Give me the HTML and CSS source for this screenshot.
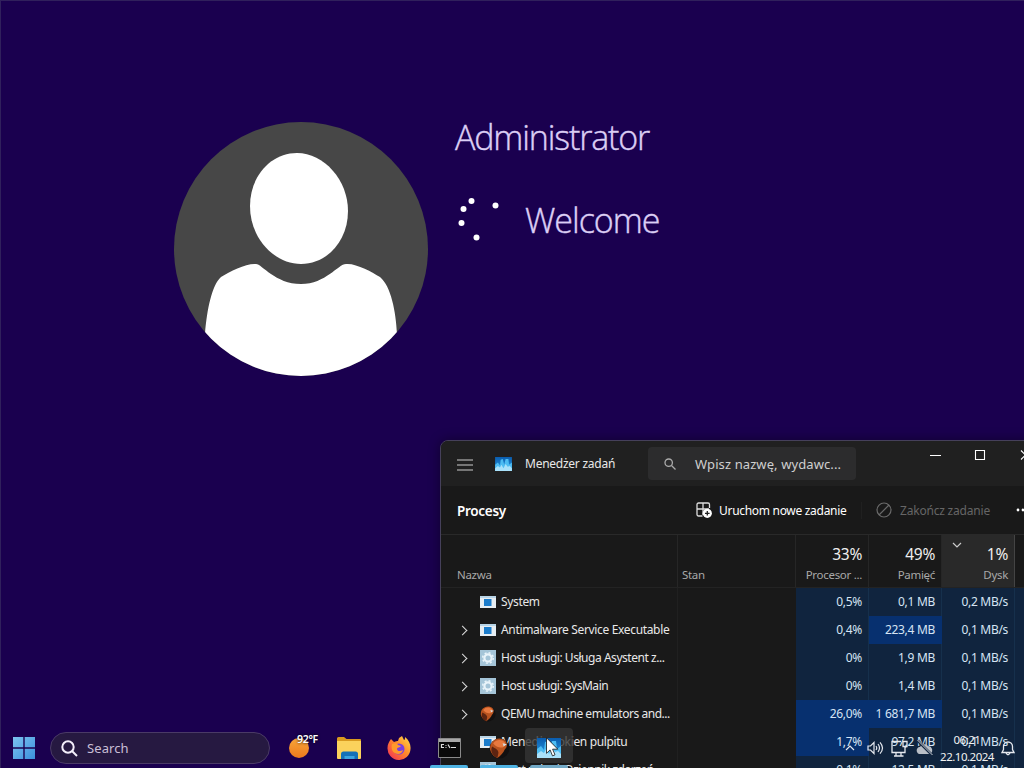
FILE: index.html
```html
<!DOCTYPE html>
<html lang="pl">
<head>
  <meta charset="UTF-8">
  <meta name="viewport" content="width=device-width, initial-scale=1.0">
  <title>Menedżer zadań</title>
  <link rel="stylesheet" href="styles.css">
</head>
<body>
  <svg width="0" height="0" class="defs">
    <defs>
      <linearGradient id="blue" x1="0" y1="0" x2="0" y2="1"><stop offset="0" stop-color="#0a5cae"/><stop offset="1" stop-color="#2ba0e6"/></linearGradient>
      <linearGradient id="win" x1="0" y1="0" x2="1" y2="1"><stop offset="0" stop-color="#7cc4ef"/><stop offset="1" stop-color="#3b8fdc"/></linearGradient>
      <linearGradient id="sun" x1="0" y1="0" x2="0" y2="1"><stop offset="0" stop-color="#f7a63a"/><stop offset="1" stop-color="#ec7a1c"/></linearGradient>
      <linearGradient id="fox" x1="1" y1="0" x2="0" y2="1"><stop offset="0" stop-color="#ffe14a"/><stop offset=".45" stop-color="#ff8a2a"/><stop offset="1" stop-color="#f0285a"/></linearGradient>
    </defs>
    <symbol id="app" viewBox="0 0 16 14"><path fill="#e6edf2" d="M0 1h16v12H0z"/><path fill="#b8d4e6" d="M0 1h16v2H0z"/><path fill="#1b7ccb" d="M4 4h7.500v7H4z"/></symbol>
    <symbol id="gear" viewBox="0 0 16 16"><path fill="#a5c5d8" d="M0 0h16v16H0z"/><circle cx="8" cy="8" r="3.600" fill="none" stroke="#e9f4fa" stroke-width="2.200"/><circle cx="8" cy="8" r="5.300" fill="none" stroke="#e9f4fa" stroke-width="1.500" stroke-dasharray="2 2.160"/></symbol>
    <symbol id="qemu" viewBox="0 0 20 20"><circle cx="10" cy="10" r="9.500" fill="#121010"/><path fill="#b9531f" d="M2 5C5 0 12-1 16 3c2 3 1 6-1 8-1 3-4 6-7 8-3-1-6-4-7-8 0-2 0-4 1-6z"/><path fill="#e8793f" d="M4 5C7 1 12 1 15 4c1 2 0 4-2 5-3 0-6 0-9-4z"/><path fill="#d5dde2" d="M13 5l4 1-3 2z"/><path fill="#5d2411" d="M3 8c3 2 6 3 6 6l-1 5C3 17 1 12 3 8z"/></symbol>
    <symbol id="tm" viewBox="0 0 24 20"><path fill="url(#blue)" d="M0 0h24v20H0z"/><path fill="#4dbcf2" d="M0 20v-9l4-3 3 4 1-8 3-1 2 8 2-8 4 0 1 8 4-3v12z"/><path fill="#a9e1fa" d="M0 20v-4l4-3 3 2 2-4 3 5 3-6 3 4 3-1 3 3v4z"/></symbol>
  </svg>

  <div class="desktop">
    <div class="login">
      <svg class="avatar" width="254" height="254" viewBox="0 0 254 254">
        <clipPath id="round"><circle cx="127" cy="127" r="127"/></clipPath>
        <g clip-path="url(#round)">
          <path fill="#474747" d="M0 0h254v254H0z"/>
          <path fill="#fff" d="M123 31C150 31 174 58 174 89C174 119 153 142 127 142C101 142 76 117 76 84C76 54 97 31 123 31z"/>
          <path fill="#fff" d="M31 212C33 187 38 163 47 155C56 149 73 141 82 142C88 142 101 162 127 162C152 162 164 142 172 142C182 141 198 150 206 155C217 164 222 190 223 212L223 254H31z"/>
        </g>
      </svg>
      <div class="login-text">
        <div class="user">Administrator</div>
        <div class="status">
          <svg width="44" height="46" viewBox="0 0 44 46" fill="#fff">
            <circle cx="15.500" cy="4" r="3"/><circle cx="39.500" cy="8.500" r="3"/><circle cx="7.500" cy="12" r="3"/><circle cx="5.500" cy="26" r="3"/><circle cx="20.500" cy="40.500" r="3"/>
          </svg>
          <span class="welcome">Welcome</span>
        </div>
      </div>
    </div>

    <div class="window">
      <div class="titlebar">
        <svg class="menu" width="16" height="12" viewBox="0 0 16 12" stroke="#ccc" stroke-width="1.200"><path d="M0 1h16M0 6h16M0 11h16"/></svg>
        <svg class="logo" width="17" height="14"><use href="#tm"/></svg>
        <span class="title">Menedżer zadań</span>
        <div class="find">
          <svg width="12" height="12" viewBox="0 0 12 12" fill="none" stroke="#aaa" stroke-width="1.300"><circle cx="4.700" cy="4.700" r="3.700"/><path d="M7.500 7.500l4 4"/></svg>
          <span>Wpisz nazwę, wydawc...</span>
        </div>
        <svg class="controls" width="96" height="12" viewBox="0 0 96 12" fill="none" stroke="#fff" stroke-width="1.100"><path d="M0 6.500h11M91 1.500l9 9M100 1.500l-9 9"/><path d="M45.500 1.500h9v9h-9z"/></svg>
      </div>

      <div class="toolbar">
        <h1>Procesy</h1>
        <div class="action run">
          <svg width="16" height="16" viewBox="0 0 16 16" fill="none" stroke="#ddd" stroke-width="1.300"><path d="M6.500 14H2.500A1.500 1.500 0 0 1 1 12.500v-10A1.500 1.500 0 0 1 2.500 1h9.500A1.500 1.500 0 0 1 13.500 2.500V6M1 7h12M7 1v12"/><circle cx="11.300" cy="11.300" r="4.600" fill="#fff" stroke="none"/><path stroke="#222" d="M9 11.300h4.600M11.300 9v4.600"/></svg>
          <span>Uruchom nowe zadanie</span>
        </div>
        <div class="action end">
          <svg width="16" height="16" viewBox="0 0 16 16" fill="none" stroke="#6a6a6a" stroke-width="1.200"><circle cx="8" cy="8" r="7"/><path d="M3 13L13 3"/></svg>
          <span>Zakończ zadanie</span>
        </div>
        <svg class="more" width="14" height="4" viewBox="0 0 14 4" fill="#fff"><circle cx="2" cy="2" r="1.400"/><circle cx="7" cy="2" r="1.400"/></svg>
      </div>

      <div class="grid head">
        <div class="col left">Nazwa</div>
        <div class="col left">Stan</div>
        <div class="col"><b>33%</b>Procesor ...</div>
        <div class="col"><b>49%</b>Pamięć</div>
        <div class="col sorted"><svg width="10" height="6" viewBox="0 0 10 6" fill="none" stroke="#ccc" stroke-width="1.200"><path d="M1 1l4 4 4-4"/></svg><b>1%</b>Dysk</div>
        <div class="col"></div>
      </div>

      <div class="grid row">
        <div class="name"><i></i><svg width="16" height="14"><use href="#app"/></svg><span>System</span></div>
        <div class="state"></div><div class="cell">0,5%</div><div class="cell">0,1 MB</div><div class="cell">0,2 MB/s</div><div class="cell"></div>
      </div>
      <div class="grid row">
        <div class="name"><i class="arrow"></i><svg width="16" height="14"><use href="#app"/></svg><span>Antimalware Service Executable</span></div>
        <div class="state"></div><div class="cell">0,4%</div><div class="cell hot">223,4 MB</div><div class="cell">0,1 MB/s</div><div class="cell"></div>
      </div>
      <div class="grid row">
        <div class="name"><i class="arrow"></i><svg width="16" height="16"><use href="#gear"/></svg><span class="tight">Host usługi: Usługa Asystent z...</span></div>
        <div class="state"></div><div class="cell">0%</div><div class="cell">1,9 MB</div><div class="cell">0,1 MB/s</div><div class="cell"></div>
      </div>
      <div class="grid row">
        <div class="name"><i class="arrow"></i><svg width="16" height="16"><use href="#gear"/></svg><span class="tight">Host usługi: SysMain</span></div>
        <div class="state"></div><div class="cell">0%</div><div class="cell">1,4 MB</div><div class="cell">0,1 MB/s</div><div class="cell"></div>
      </div>
      <div class="grid row">
        <div class="name"><i class="arrow"></i><svg width="16" height="16"><use href="#qemu"/></svg><span class="tight">QEMU machine emulators and...</span></div>
        <div class="state"></div><div class="cell hot">26,0%</div><div class="cell hot">1 681,7 MB</div><div class="cell">0,1 MB/s</div><div class="cell"></div>
      </div>
      <div class="grid row">
        <div class="name"><i></i><svg width="16" height="14"><use href="#app"/></svg><span>Menedżer okien pulpitu</span></div>
        <div class="state"></div><div class="cell hot">1,7%</div><div class="cell">97,2 MB</div><div class="cell">0,1 MB/s</div><div class="cell"></div>
      </div>
      <div class="grid row">
        <div class="name"><i class="arrow"></i><svg width="16" height="16"><use href="#gear"/></svg><span class="tight">Host usługi: Dziennik zdarzeń</span></div>
        <div class="state"></div><div class="cell">0,1%</div><div class="cell">12,5 MB</div><div class="cell">0,1 MB/s</div><div class="cell"></div>
      </div>
    </div>

    <div class="taskbar">
      <svg class="start" width="22" height="22" viewBox="0 0 22 22" fill="url(#win)"><path d="M0 0h10.300v10.300H0zM11.700 0H22v10.300H11.700zM0 11.700h10.300V22H0zM11.700 11.700H22V22H11.700z"/></svg>
      <div class="search">
        <svg width="17" height="17" viewBox="0 0 17 17" fill="none" stroke="#f3eefa" stroke-width="2"><circle cx="7" cy="7" r="5.700"/><path d="M11 11l5 5"/></svg>
        <span>Search</span>
      </div>
      <div class="task weather">
        <svg width="20" height="20" viewBox="0 0 20 20"><circle cx="10" cy="10" r="10" fill="url(#sun)"/></svg>
        <span class="temp">92°F</span>
      </div>
      <div class="task">
        <svg width="24" height="22" viewBox="0 0 24 22"><path fill="#d99a1f" d="M0 1.500Q0 0 1.500 0H7l2.500 2H23q1 0 1 1v4H0z"/><path fill="#fbd25c" d="M0 4h24v17q0 1-1 1H1q-1 0-1-1z"/><path fill="#1471b8" d="M4 22v-5q0-2.500 2.500-2.500h12Q21 14.500 21 17v5z"/><path fill="#3ba4df" d="M7.500 19h10v3h-10z"/></svg>
      </div>
      <div class="task">
        <svg width="24" height="24" viewBox="0 0 24 24"><path fill="url(#fox)" d="M4 3l3 3c2-1 3-1 4-1l1-3 3-2 2 4c1 0 1-2 1-3 4 3 6 8 5.500 12A11.500 11.500 0 0 1 .5 12C.5 8 2 6 4 3z"/><circle cx="12" cy="13" r="5.500" fill="#7a3fe0"/><path fill="#ff9a2b" d="M5 8c3-1 5-1 6 1l3 1c-1 2-4 1-4 3s3 3 6 1c-1 4-5 5-8 3-3-1-4-5-3-9z"/></svg>
      </div>
      <div class="task running">
        <svg width="23" height="20" viewBox="0 0 23 20"><path fill="#0a0a0a" stroke="#8a8a8a" d="M.5.5h22v19H.5z"/><path fill="#a9a9a9" d="M1 1h21v3H1z"/><path fill="none" stroke="#ddd" stroke-width="1.200" d="M6 6.500H3.500v3H6M8 7v.8M8 9v.8M10 6.500l2 3.500M13 9.500h5"/></svg>
      </div>
      <div class="task running">
        <svg width="21" height="21"><use href="#qemu"/></svg>
      </div>
      <div class="task running active">
        <svg width="24" height="20"><use href="#tm"/></svg>
      </div>
      <div class="tray">
        <svg width="10" height="6" viewBox="0 0 10 6" fill="none" stroke="#e5e8ee" stroke-width="1.200"><path d="M1 5l4-4 4 4"/></svg>
        <svg class="vol" width="17" height="14" viewBox="0 0 17 14" fill="none" stroke="#e5e8ee" stroke-width="1.200"><path d="M1 5h2.500L7 1.500v11L3.500 9H1zM9 5q1.500 2 0 4M11 3q3 4 0 8M13 1.300q5 5.700 0 11.400"/></svg>
        <svg class="net" width="17" height="17" viewBox="0 0 17 17" fill="none" stroke="#e5e8ee" stroke-width="1.300"><path d="M10 1.500H1v11h13V9M5 12.500v3M10 12.500v3M3 16h9.500M12 1.500h4v5h-4zM14 6.500V10"/></svg>
        <svg class="cloud" width="17" height="16" viewBox="0 0 17 16"><path fill="#b9bec6" d="M1 12c-1-3 1-5 3-5 1-3 6-4 8-1 3 0 5 3 4 6-1 2-2 2-3 2H4c-1 0-2 0-3-2z"/><path stroke="#172a44" stroke-width="2.500" d="M1 0l15 15"/><path stroke="#c8ccd2" d="M1.500 0l15 15"/></svg>
        <div class="clock"><span>06:21</span><span>22.10.2024</span></div>
        <svg class="bell" width="14" height="15" viewBox="0 0 14 15" fill="none" stroke="#e5e8ee" stroke-width="1.300"><path d="M1 11.500l1.500-3V5.500a4.500 4.500 0 0 1 9 0v3l1.500 3zM5 12q2 3.500 4 0"/></svg>
      </div>
    </div>

    <svg class="cursor" width="13" height="20" viewBox="0 0 13 20"><path fill="#fff" stroke="#111" stroke-width=".8" d="M.5.8v15.500l3.600-3.400 2.400 6 2.500-1.100-2.400-5.600h5.200z"/></svg>
  </div>
</body>
</html>
```

FILE: styles.css
```css
body {
  margin: 0;
  font-family: "Noto Sans", "Open Sans", sans-serif;
  font-size: 12px;
  color: #e8e8e8;
}
.defs {
  position: absolute;
}
.desktop {
  position: relative;
  box-sizing: border-box;
  width: 1024px;
  height: 768px;
  overflow: hidden;
  background: #1a004f;
  border-top: 1px solid #30205c;
  border-left: 1px solid #30205c;
}

/* login screen */
.login {
  display: flex;
  gap: 28px;
  padding: 121px 0 0 173px;
}
.login-text {
  font-family: "Open Sans", sans-serif;
  font-weight: 300;
  font-size: 34px;
  line-height: 40px;
  color: #dccff5;
  -webkit-text-stroke: 0.4px #dccff5;
}
.user {
  margin: -5px 0 0 -1px;
  letter-spacing: -1.15px;
}
.status {
  display: flex;
  margin-top: 40px;
}
.status span {
  margin: 3px 0 0 25px;
  letter-spacing: -1px;
}

/* task manager */
.window {
  position: absolute;
  left: 439px;
  top: 439px;
  width: 620px;
  height: 400px;
  box-sizing: border-box;
  border: 1px solid #45405a;
  border-radius: 8px 0 0 0;
  background: #191919;
  overflow: hidden;
  box-shadow: 0 0 12px rgba(0, 0, 0, 0.4);
}
.titlebar {
  display: flex;
  align-items: center;
  height: 45px;
  padding-left: 16px;
  background: #202020;
}
.menu {
  margin-top: 2px;
}
.logo {
  margin-left: 22px;
}
.title {
  width: 123px;
  margin-left: 13px;
  letter-spacing: -0.25px;
  white-space: nowrap;
}
.find {
  display: flex;
  align-items: center;
  box-sizing: border-box;
  width: 208px;
  height: 33px;
  padding-left: 16px;
  background: #2c2c2d;
  border-radius: 4px;
  font-size: 13px;
  letter-spacing: 0.1px;
  color: #cfcfcf;
  white-space: nowrap;
}
.find span {
  margin-left: 19px;
}
.controls {
  margin: -18px 0 0 74px;
}
.toolbar {
  display: flex;
  align-items: center;
  height: 48px;
  padding-left: 16px;
  border-bottom: 1px solid #292929;
}
h1 {
  width: 239px;
  margin: 2px 0 0;
  font-size: 13.5px;
  font-weight: 600;
  letter-spacing: -0.3px;
  color: #fff;
}
.action {
  display: flex;
  align-items: center;
  white-space: nowrap;
}
.action span {
  margin-left: 7px;
  letter-spacing: -0.3px;
}
.run {
  width: 165px;
  color: #fff;
  border-right: 1px solid #202020;
}
.end {
  width: 126px;
  margin-left: 14px;
  color: #666;
}
.end span {
  margin-left: 8px;
  letter-spacing: -0.2px;
}
.more {
  margin-left: 14px;
}
.grid {
  display: grid;
  grid-template-columns: 237px 118px 73px 73px 73px 50px;
}
.head {
  height: 52px;
  border-bottom: 1px solid #232323;
}
.col {
  position: relative;
  display: flex;
  flex-direction: column;
  justify-content: flex-end;
  padding: 0 6px 3px 0;
  border-right: 1px solid #262626;
  text-align: right;
  font-size: 11.5px;
  line-height: 18px;
  letter-spacing: -0.3px;
  color: #a8a8a8;
}
.col.left {
  padding-left: 16px;
  text-align: left;
}
.col.left + .left {
  padding-left: 4px;
}
.col b {
  margin-bottom: 2px;
  font-size: 15.5px;
  font-weight: 400;
  line-height: 20px;
  letter-spacing: -0.3px;
  color: #eee;
}
.sorted {
  background: #292929;
  border-right-color: #444;
}
.sorted svg {
  position: absolute;
  left: 10px;
  top: 7px;
}
.row {
  height: 28px;
  line-height: 28px;
  white-space: nowrap;
}
.name {
  display: flex;
  align-items: center;
  border-right: 1px solid #202020;
}
.name i {
  box-sizing: border-box;
  width: 7px;
  height: 7px;
  margin: 0 14px 0 18px;
}
.name .arrow {
  border-top: 1.5px solid #ddd;
  border-right: 1.5px solid #ddd;
  transform: rotate(45deg);
}
.name span {
  margin-left: 5px;
  letter-spacing: -0.34px;
}
.name .tight {
  letter-spacing: -0.46px;
}
.cell {
  padding-right: 6px;
  border-right: 1px solid #16304c;
  background: #10243e;
  text-align: right;
  letter-spacing: -0.3px;
  color: #d6e4f4;
}
.cell.hot {
  background: #07306f;
  border-color: #07306f;
}

/* taskbar */
.taskbar {
  position: absolute;
  left: 0;
  right: 0;
  bottom: 0;
  display: flex;
  align-items: center;
  height: 40px;
}
.start {
  margin-left: 12px;
}
.search {
  display: flex;
  align-items: center;
  box-sizing: border-box;
  width: 220px;
  height: 32px;
  margin: 0 4px 0 15px;
  padding-left: 10px;
  border: 1px solid #4a3a66;
  border-radius: 16px;
  background: #261941;
  font-size: 13px;
  letter-spacing: 0.1px;
  color: #c9bfd6;
}
.search span {
  margin-left: 9px;
}
.task {
  position: relative;
  display: flex;
  align-items: center;
  justify-content: center;
  width: 50px;
  height: 40px;
}
.temp {
  position: absolute;
  left: 23px;
  top: 4px;
  font-size: 10.5px;
  font-weight: 600;
  letter-spacing: -0.3px;
  color: #fff;
  text-shadow: 0 0 3px #000;
}
.running::after {
  content: "";
  position: absolute;
  left: 6px;
  right: 6px;
  bottom: 0;
  height: 3px;
  border-radius: 2px 2px 0 0;
  background: #4fb3e3;
}
.active::before {
  content: "";
  position: absolute;
  left: 1px;
  top: 0;
  width: 48px;
  height: 35px;
  border-radius: 4px;
  background: rgba(52, 52, 52, 0.8);
}
.active svg {
  position: relative;
}
.active::after {
  background: #72a9c6;
}
.tray {
  display: flex;
  align-items: center;
  margin-left: auto;
  padding-right: 9px;
}
.vol {
  margin-left: 12px;
}
.net {
  margin-left: 7px;
}
.cloud {
  margin-left: 8px;
}
.clock {
  display: flex;
  flex-direction: column;
  align-items: center;
  width: 54px;
  margin: 0 7px 0 7px;
  font-size: 11.5px;
  line-height: 17px;
  letter-spacing: -0.5px;
  color: #f2f2f2;
}
.cursor {
  position: absolute;
  left: 545px;
  top: 736px;
}
```
